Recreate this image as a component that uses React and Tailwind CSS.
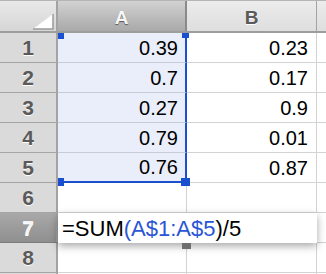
import React from "react";

const font = { fontFamily: '"Liberation Sans", Arial, sans-serif' };

function RowHead({ n, active }) {
  return (
    <div
      className={`w-[58px] shrink-0 border-r-2 border-r-[#a3a3a3] flex items-center justify-center text-[21px] font-bold [text-shadow:0_1px_0_#ffffff] ${
        active
          ? "bg-gradient-to-b from-[#a9a9a9] to-[#8f8f8f] text-[#f4f4f4] [text-shadow:0_-1px_0_#6a6a6a]"
          : "bg-[#dadada] text-[#5a5a5a]"
      }`}
    >
      {n}
    </div>
  );
}

const data = [
  ["0.39", "0.23"],
  ["0.7", "0.17"],
  ["0.27", "0.9"],
  ["0.79", "0.01"],
  ["0.76", "0.87"],
];

export default function App() {
  return (
    <div className="w-[326px] h-[274px] overflow-hidden bg-white relative" style={font}>
      {/* header row */}
      <div className="flex h-[33px] border-t border-t-[#b5b5b5] border-b-2 border-b-[#9d9d9d]">
        <div className="w-[58px] shrink-0 border-r-2 border-r-[#a3a3a3] bg-gradient-to-b from-[#e9e9e9] to-[#d6d6d6] relative">
          <svg className="absolute left-[32px] top-[12px]" width="22" height="17" viewBox="0 0 22 17">
            <polygon points="1,16 21,16 21,1" fill="#ffffff" stroke="none" />
            <polyline points="21,1 21,16 1,16" fill="none" stroke="#9a9a9a" strokeWidth="1.5" />
          </svg>
        </div>
        <div className="w-[129px] shrink-0 border-r-2 border-r-[#8a8a8a] bg-gradient-to-b from-[#d2d2d2] to-[#a9a9a9] flex items-center justify-center pt-[4px] text-[19px] font-bold text-[#f7f7f7] [text-shadow:0_1px_1px_#555555]">
          A
        </div>
        <div className="w-[130px] shrink-0 border-r border-r-[#a3a3a3] bg-gradient-to-b from-[#ececec] to-[#dedede] flex items-center justify-center pt-[4px] text-[19px] font-bold text-[#5a5a5a] [text-shadow:0_1px_0_#ffffff]">
          B
        </div>
        <div className="flex-1 bg-gradient-to-b from-[#ececec] to-[#dedede]" />
      </div>

      {/* data rows */}
      {data.map((r, i) => (
        <div key={i} className="flex h-[30px]">
          <div className="flex w-[58px] shrink-0 border-b border-b-[#a5a5a5]">
            <RowHead n={i + 1} />
          </div>
          <div
            className={`w-[129px] shrink-0 bg-[#e9eefa] border-r-2 border-r-[#1a4fd0] flex items-center justify-end pr-[7px] text-[20px] text-black ${
              i === 4 ? "border-b-2 border-b-[#1a4fd0]" : "border-b border-b-[#c6cbd6]"
            }`}
          >
            {r[0]}
          </div>
          <div className="w-[130px] shrink-0 border-r border-r-[#d3d3d3] border-b border-b-[#d3d3d3] flex items-center justify-end pr-[8px] text-[20px] text-black">
            {r[1]}
          </div>
          <div className="flex-1 border-b border-b-[#d3d3d3]" />
        </div>
      ))}

      {/* row 6 */}
      <div className="flex h-[30px]">
        <div className="flex w-[58px] shrink-0 border-b border-b-[#a5a5a5]">
          <RowHead n={6} />
        </div>
        <div className="w-[129px] shrink-0 border-r border-r-[#d3d3d3] border-b border-b-[#d3d3d3]" />
        <div className="w-[130px] shrink-0 border-r border-r-[#d3d3d3] border-b border-b-[#d3d3d3]" />
        <div className="flex-1 border-b border-b-[#d3d3d3]" />
      </div>

      {/* row 7 (editing) */}
      <div className="flex h-[30px] relative z-10">
        <div className="flex w-[58px] shrink-0 border-b border-b-[#7d7d7d]">
          <RowHead n={7} active />
        </div>
        <div className="w-[259px] shrink-0 bg-white shadow-[0_3px_8px_rgba(0,0,0,0.35)] flex items-center pl-[4px] text-[22px] text-black relative">
          <span>=SUM</span>
          <span className="text-[#2a55d4]">(A$1:A$5</span>
          <span>)/5</span>
          <div className="absolute left-[124px] bottom-[-6px] w-[9px] h-[6px] bg-[#6f6f6f]" />
        </div>
        <div className="flex-1 border-b border-b-[#d3d3d3]" />
      </div>

      {/* row 8 */}
      <div className="flex h-[30px]">
        <div className="flex w-[58px] shrink-0 border-b border-b-[#a5a5a5]">
          <RowHead n={8} />
        </div>
        <div className="w-[129px] shrink-0 border-r border-r-[#d3d3d3] border-b border-b-[#d3d3d3]" />
        <div className="w-[130px] shrink-0 border-r border-r-[#d3d3d3] border-b border-b-[#d3d3d3]" />
        <div className="flex-1 border-b border-b-[#d3d3d3]" />
      </div>
      <div className="flex h-[30px]">
        <div className="w-[58px] shrink-0 bg-[#dadada] border-r-2 border-r-[#a3a3a3]" />
        <div className="w-[129px] shrink-0 border-r border-r-[#d3d3d3]" />
        <div className="w-[130px] shrink-0 border-r border-r-[#d3d3d3]" />
      </div>

      {/* selection handles */}
      <div className="absolute left-[58px] top-[33px] w-[6px] h-[6px] bg-[#1a4fd0]" />
      <div className="absolute left-[182px] top-[33px] w-[7px] h-[5px] bg-[#1a4fd0]" />
      <div className="absolute left-[58px] top-[178px] w-[6px] h-[8px] bg-[#1a4fd0]" />
      <div className="absolute left-[181px] top-[178px] w-[9px] h-[8px] bg-[#1a4fd0]" />
    </div>
  );
}
